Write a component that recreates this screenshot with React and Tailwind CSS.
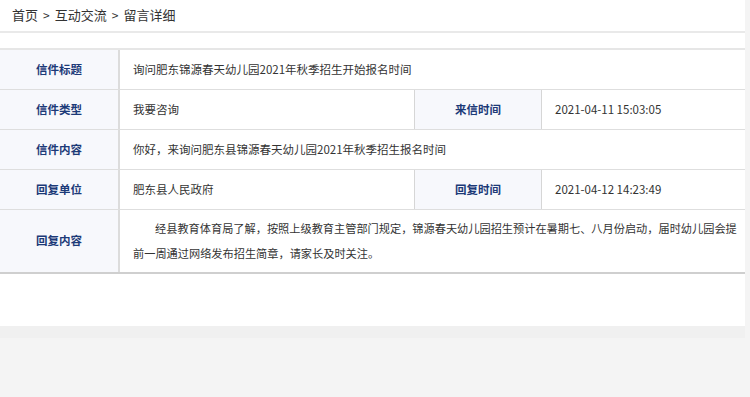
import React from 'react';

function Label({ children, className = '' }) {
  return (
    <div className={`bg-[#f7f8fc] flex items-center justify-center font-bold text-[#1c3a78] ${className}`}>
      {children}
    </div>
  );
}

function App() {
  return (
    <div className="w-[750px] h-[397px] bg-[#f4f4f4] font-['Noto_Sans_CJK_SC',sans-serif] text-[#333] overflow-hidden">
      <div className="w-[745px] h-[326px] bg-white">

        {/* Breadcrumb */}
        <div className="h-[33px] pl-3 flex items-center border-b-2 border-[#e9e9e9] text-[13px] pb-[2px]">
          <span>首页</span>
          <span className="mx-[5px] text-[12px]">&gt;</span>
          <span>互动交流</span>
          <span className="mx-[5px] text-[12px]">&gt;</span>
          <span>留言详细</span>
        </div>

        {/* Detail table */}
        <div className="mt-[15px] border-t-2 border-[#e6e6e6] text-[11.5px]">
          <div className="flex h-[40px] border-b border-[#dedede]">
            <Label className="w-[120px] border-r-2 border-[#dcdcdc]">信件标题</Label>
            <div className="flex-1 pl-[13px] flex items-center">询问肥东锦源春天幼儿园2021年秋季招生开始报名时间</div>
          </div>

          <div className="flex h-[40px] border-b border-[#dedede]">
            <Label className="w-[120px] border-r-2 border-[#dcdcdc]">信件类型</Label>
            <div className="w-[294px] pl-[13px] flex items-center">我要咨询</div>
            <Label className="w-[128px] border-x border-[#d6d6d6]">来信时间</Label>
            <div className="flex-1 pl-[13px] flex items-center">2021-04-11 15:03:05</div>
          </div>

          <div className="flex h-[40px] border-b border-[#dedede]">
            <Label className="w-[120px] border-r-2 border-[#dcdcdc]">信件内容</Label>
            <div className="flex-1 pl-[13px] flex items-center">你好，来询问肥东县锦源春天幼儿园2021年秋季招生报名时间</div>
          </div>

          <div className="flex h-[40px] border-b border-[#dedede]">
            <Label className="w-[120px] border-r-2 border-[#dcdcdc]">回复单位</Label>
            <div className="w-[294px] pl-[13px] flex items-center">肥东县人民政府</div>
            <Label className="w-[128px] border-x border-[#d6d6d6]">回复时间</Label>
            <div className="flex-1 pl-[13px] flex items-center">2021-04-12 14:23:49</div>
          </div>

          <div className="flex h-[64px] border-b-2 border-[#cfcfcf]">
            <Label className="w-[120px] border-r-2 border-[#dcdcdc]">回复内容</Label>
            <div className="flex-1 pl-[13px] pr-[4px] flex items-center">
              <p className="text-[11.2px] leading-[25px] indent-[22px]">
                经县教育体育局了解，按照上级教育主管部门规定，锦源春天幼儿园招生预计在暑期七、八月份启动，届时幼儿园会提前一周通过网络发布招生简章，请家长及时关注。
              </p>
            </div>
          </div>
        </div>
      </div>
      <div className="w-[745px] h-[12px] bg-[#f0f0f0]"></div>
    </div>
  );
}

export default App;
